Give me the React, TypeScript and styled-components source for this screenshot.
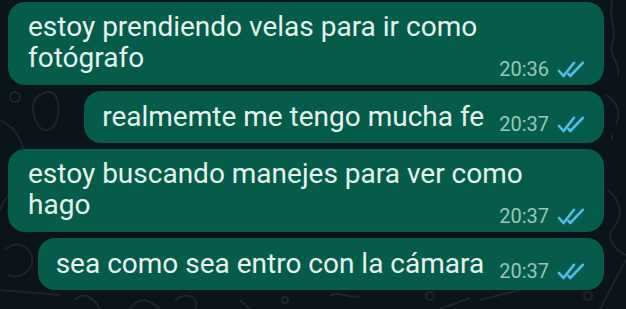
import React from "react";
import styled, {createGlobalStyle} from "styled-components";

const GlobalStyle = createGlobalStyle`
  html, body {
    margin: 0;
    padding: 0;
    background: #0b1418;
  }
  body {
    font-family: Roboto, "Noto Sans", "Liberation Sans", sans-serif;
  }
`;

const Screen = styled.div`
  position: relative;
  width: 626px;
  height: 309px;
  overflow: hidden;
  background: #0b1418;
`;

// wallpaper doodles, sits under the chat
const Wallpaper = styled.svg`
  position: absolute;
  inset: 0;
  z-index: 0;
`;

const Chat = styled.div`
  position: relative;
  z-index: 1;
  display: flex;
  flex-direction: column;
  align-items: flex-end;
  gap: 6px;
  padding: 2px 22px 0 8px;
`;

const Bubble = styled.div<{ $wide?: boolean }>`
  display: flex;
  flex-direction: ${p => (p.$wide ? "column" : "row")};
  align-items: flex-end;
  align-self: ${p => (p.$wide ? "stretch" : "flex-end")};
  background: #065c4a;
  border-radius: 17px;
  padding: ${p => (p.$wide ? "9px 19px 4px 20px" : "10px 19px 11px 18px")};
`;

const Text = styled.div<{ $wide?: boolean }>`
  align-self: ${p => (p.$wide ? "stretch" : "auto")};
  color: #e5f3ee;
  font-size: 28px;
  line-height: 31px;
  white-space: nowrap;
`;

const Meta = styled.div<{ $wide?: boolean }>`
  display: flex;
  align-items: center;
  gap: 8px;
  margin: ${p => (p.$wide ? "-16px 0 0 0" : "0 0 -4px 15px")};
  height: 24px;
`;

const Time = styled.span`
  color: #97c6ba;
  font-size: 20px;
  line-height: 24px;
`;

const Ticks = () => (
    <svg width="28" height="17" viewBox="0 0 28 17" fill="none">
        <path d="M2 10 L6.5 15 L17 1.8" stroke="#53bdeb" strokeWidth="2.6" strokeLinecap="round" strokeLinejoin="round"/>
        <path d="M11.5 13 L13.2 15 L25.8 1.8" stroke="#53bdeb" strokeWidth="2.6" strokeLinecap="round" strokeLinejoin="round"/>
    </svg>
);

const messages = [
    {lines: ["estoy prendiendo velas para ir como", "fotógrafo"], time: "20:36"},
    {lines: ["realmemte me tengo mucha fe"], time: "20:37"},
    {lines: ["estoy buscando manejes para ver como", "hago"], time: "20:37"},
    {lines: ["sea como sea entro con la cámara"], time: "20:37"},
];

const App = () => {
    return (
        <Screen>
            <GlobalStyle/>
            <Wallpaper width="626" height="309" viewBox="0 0 626 309" fill="none" stroke="#1c272d" strokeWidth="2">
                <path d="M0 120 C20 130 30 150 20 175 C12 195 2 200 0 210"/>
                <circle cx="15" cy="97" r="5"/>
                <path d="M40 95 C55 85 60 100 58 115 C56 130 45 135 38 125 C32 115 30 100 40 95 Z"/>
                <path d="M5 250 C15 240 30 245 32 258 C34 270 20 280 8 275"/>
                <path d="M0 290 L60 295 M75 300 C85 290 95 300 100 309"/>
                <path d="M130 309 C140 295 150 300 160 309"/>
                <path d="M175 300 C190 290 200 300 195 309"/>
                <path d="M240 300 L250 309"/>
                <circle cx="285" cy="300" r="3"/>
                <path d="M330 296 C340 290 350 300 360 296"/>
                <circle cx="430" cy="296" r="4"/>
                <path d="M440 309 L470 298 M480 300 L520 290"/>
                <circle cx="588" cy="296" r="4"/>
                <path d="M600 309 C610 290 620 270 626 260"/>
                <path d="M612 0 C608 20 618 30 612 45 C608 55 620 60 618 75"/>
                <path d="M606 95 C615 100 622 110 616 125 M612 135 L612 140"/>
                <path d="M608 190 C620 200 625 215 612 230 C606 238 615 250 626 255"/>
            </Wallpaper>
            <Chat>
                {messages.map((m, i) => {
                    const wide = m.lines.length > 1;
                    return (
                        <Bubble key={i} $wide={wide}>
                            <Text $wide={wide}>
                                {m.lines.map((l, j) => <div key={j}>{l}</div>)}
                            </Text>
                            <Meta $wide={wide}>
                                <Time>{m.time}</Time>
                                <Ticks/>
                            </Meta>
                        </Bubble>
                    );
                })}
            </Chat>
        </Screen>
    );
};
export default App;
